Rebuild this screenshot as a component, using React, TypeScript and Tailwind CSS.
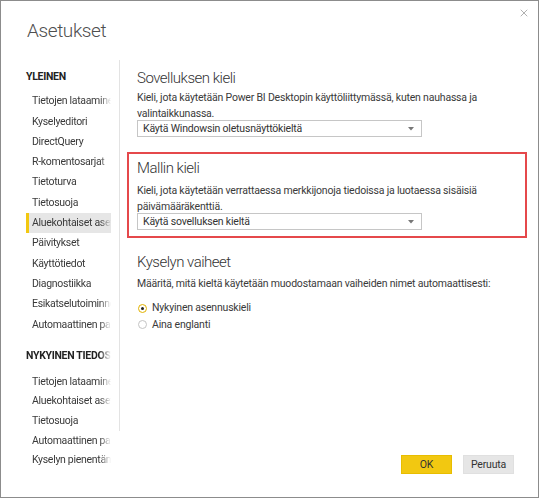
import { X } from 'lucide-react';

const general = [
    'Tietojen lataaminen',
    'Kyselyeditori',
    'DirectQuery',
    'R-komentosarjat',
    'Tietoturva',
    'Tietosuoja',
    'Aluekohtaiset asetukset',
    'Päivitykset',
    'Käyttötiedot',
    'Diagnostiikka',
    'Esikatselutoiminnot',
    'Automaattinen palautus',
];

const currentFile = [
    'Tietojen lataaminen',
    'Aluekohtaiset asetukset',
    'Tietosuoja',
    'Automaattinen palautus',
    'Kyselyn pienentäminen',
];

const fade = '[mask-image:linear-gradient(to_right,black_86%,transparent)]';

function NavItem({ label, active, compact }: { label: string; active?: boolean; compact?: boolean }) {
    return (
        <div className={`flex items-center ${compact ? 'h-[19.7px]' : 'h-[20.3px]'} ${active ? 'bg-[#e6e6e6] border-l-[3px] border-[#f2c811] pl-[3px]' : 'pl-[6px]'}`}>
            <span className={`block w-[79px] overflow-hidden whitespace-nowrap ${fade}`}>{label}</span>
        </div>
    );
}

function Select({ value }: { value: string }) {
    return (
        <div className="flex items-center justify-between w-[285px] h-[17px] -mt-[1px] border border-[#c6c6c6] bg-white pl-[5px] pr-[7px]">
            <span className="text-[#333]">{value}</span>
            <svg width="6" height="4" viewBox="0 0 6 4" className="mt-[1px]">
                <path d="M0 0 L6 0 L3 3.5 Z" fill="#777" />
            </svg>
        </div>
    );
}

function Radio({ label, checked }: { label: string; checked?: boolean }) {
    return (
        <label className="flex items-center gap-[5px] h-[16px]">
            <span className={`flex items-center justify-center w-[9px] h-[9px] rounded-full border ${checked ? 'border-[#e2b200]' : 'border-[#c4c4c4]'}`}>
                {checked && <span className="w-[3px] h-[3px] rounded-full bg-[#222]" />}
            </span>
            <span>{label}</span>
        </label>
    );
}

export default function App() {
    return (
        <div
            className="relative flex flex-col w-[539px] h-[498px] border border-[#8c8c8c] bg-white text-[10.5px] tracking-[-0.2px] text-[#3a3a3a]"
            style={{ fontFamily: 'Roboto, "Open Sans", sans-serif' }}
        >
            <button className="absolute top-[6px] right-[8px] text-[#7a7a7a]">
                <X className="w-[12px] h-[12px]" strokeWidth={1.2} />
            </button>

            <div className="h-[59px] pl-[26px] pt-[16px]">
                <h1 className="text-[19px] font-light tracking-[-0.4px] leading-[28px] text-[#4f4f4f]">Asetukset</h1>
            </div>

            <div className="flex h-[371px]">
                {/* sidebar */}
                <div className="w-[119px] border-r border-[#e3e3e3] pl-[25px] pr-[8px] pt-[9px] tracking-[-0.3px]">
                    <div className="h-[22px] font-bold text-[#222] uppercase leading-[16px]">Yleinen</div>
                    {general.map(item => (
                        <NavItem key={item} label={item} active={item === 'Aluekohtaiset asetukset'} />
                    ))}
                    <div className={`mt-[13px] h-[24px] font-bold text-[#222] uppercase leading-[16px] whitespace-nowrap overflow-hidden ${fade}`}>
                        Nykyinen tiedosto
                    </div>
                    {currentFile.map(item => (
                        <NavItem key={item} label={item} compact />
                    ))}
                </div>

                {/* content */}
                <div className="flex-1 pl-[7px] pr-[11px] pt-[7px]">
                    <section className="pl-[10px]">
                        <h2 className="text-[15px] font-light tracking-[-0.5px] leading-[22px] text-[#333]">Sovelluksen kieli</h2>
                        <p className="leading-[15.5px] mt-[1px]">
                            Kieli, jota käytetään Power BI Desktopin käyttöliittymässä, kuten nauhassa ja valintaikkunassa.
                        </p>
                        <Select value="Käytä Windowsin oletusnäyttökieltä" />
                    </section>

                    <section className="mt-[15px] border-2 border-[#e5484b] pl-[8px] pt-[3px] pb-[6px]">
                        <h2 className="text-[15px] font-light tracking-[-0.5px] leading-[22px] text-[#333]">Mallin kieli</h2>
                        <p className="leading-[15.5px] mt-[4px]">
                            Kieli, jota käytetään verrattaessa merkkijonoja tiedoissa ja luotaessa sisäisiä päivämääräkenttiä.
                        </p>
                        <Select value="Käytä sovelluksen kieltä" />
                    </section>

                    <section className="mt-[13px] pl-[10px]">
                        <h2 className="text-[15px] font-light tracking-[-0.5px] leading-[22px] text-[#333]">Kyselyn vaiheet</h2>
                        <p className="leading-[16px] mt-[3px]">
                            Määritä, mitä kieltä käytetään muodostamaan vaiheiden nimet automaattisesti:
                        </p>
                        <div className="mt-[8px] flex flex-col gap-[0.5px] pl-[1px]">
                            <Radio label="Nykyinen asennuskieli" checked />
                            <Radio label="Aina englanti" />
                        </div>
                    </section>
                </div>
            </div>

            <div className="flex justify-end gap-[11px] pr-[24px] pt-[24px]">
                <button className="w-[51px] h-[19px] bg-[#f2c811] border border-[#e8bd00] text-[#333]">OK</button>
                <button className="w-[51px] h-[19px] bg-[#e6e6e6] border border-[#e0e0e0] text-[#333]">Peruuta</button>
            </div>
        </div>
    );
}
